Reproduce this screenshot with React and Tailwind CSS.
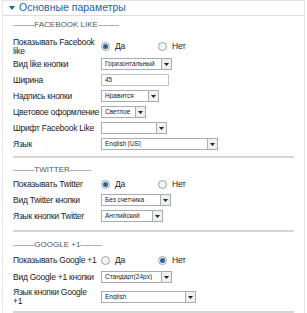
import React from "react";

function Select({ value, w }) {
  return (
    <div className={`flex h-[12px] items-center border border-[#a5acb5] bg-white ${w}`}>
      <span className="flex-1 overflow-hidden whitespace-nowrap pl-[3px] text-[6.5px] leading-none tracking-normal text-[#222]">{value}</span>
      <span className="flex h-[10px] w-[10px] shrink-0 items-center justify-center border-l border-[#a5acb5] bg-[#f0f0f0]">
        <svg width="5" height="3" viewBox="0 0 5 3">
          <path d="M0 0h5L2.5 3z" fill="#222" />
        </svg>
      </span>
    </div>
  );
}

function Radio({ checked, label }) {
  return (
    <span className="flex items-center gap-[5px]">
      <span className="flex h-[9px] w-[9px] items-center justify-center rounded-full border border-[#9aa3ad] bg-[#f4f4f4]">
        {checked && <span className="h-[5px] w-[5px] rounded-full bg-[#2a5fa0]" />}
      </span>
      {label}
    </span>
  );
}

function Row({ label, children, h = "h-[16px]", nowrap }) {
  return (
    <div className={`flex items-center ${h}`}>
      <div className={`w-[88px] shrink-0 pr-[4px] leading-[9px] ${nowrap ? "whitespace-nowrap" : ""}`}>{label}</div>
      {children}
    </div>
  );
}

function Toggle({ label, yes, h }) {
  return (
    <Row label={label} h={h}>
      <div className="flex">
        <div className="w-[57px]"><Radio checked={yes} label="Да" /></div>
        <Radio checked={!yes} label="Нет" />
      </div>
    </Row>
  );
}

function Title({ children, className }) {
  return <div className={`h-[10px] text-[8px] leading-[10px] tracking-normal text-[#555] ${className}`}>{children}</div>;
}

function Line({ className }) {
  return <div className={`h-[2px] w-[281px] bg-[#d6d6d6] ${className}`} />;
}

export default function App() {
  return (
    <div className="h-[313px] w-[307px] overflow-hidden bg-white font-['Liberation_Sans',Arial,sans-serif] text-[8.5px] tracking-[-0.25px] text-[#222]">
      <div className="mx-[2px] border-x border-t border-[#e4e4e4]">
        <div className="flex h-[15px] items-center gap-[4px] border-b border-[#dcdcdc] pl-[6px] text-[10.5px] tracking-normal text-[#1f5fa6]">
          <svg width="6" height="4" viewBox="0 0 6 4"><path d="M0 0h6L3 4z" fill="#1f5fa6" /></svg>
          Основные параметры
        </div>
        <div className="px-[10px] pt-[4px]">
          <Title>--------FACEBOOK LIKE--------</Title>
          <div className="mt-[7px]">
            <Toggle label="Показывать Facebook like" yes h="h-[19px]" />
            <Row label="Вид like кнопки"><Select value="Горизонтальный" w="w-[71px]" /></Row>
            <Row label="Ширина">
              <div className="flex h-[12px] w-[68px] items-center border border-[#c0c0c0] pl-[3px] text-[6.5px] tracking-normal">45</div>
            </Row>
            <Row label="Надпись кнопки"><Select value="Нравится" w="w-[58px]" /></Row>
            <Row label="Цветовое оформление" nowrap><Select value="Светлое" w="w-[45px]" /></Row>
            <Row label="Шрифт Facebook Like"><Select value="" w="w-[66px]" /></Row>
            <Row label="Язык"><Select value="English [US]" w="w-[117px]" /></Row>
          </div>
          <Line className="mt-[4px]" />
          <Title className="mt-[7px]">--------TWITTER--------</Title>
          <div className="mt-[1px]">
            <Toggle label="Показывать Twitter" yes />
            <Row label="Вид Twitter кнопки"><Select value="Без счетчика" w="w-[70px]" /></Row>
            <Row label="Язык кнопки Twitter"><Select value="Английский" w="w-[62px]" /></Row>
          </div>
          <Line className="mt-[6px]" />
          <Title className="mt-[8px]">--------GOOGLE +1--------</Title>
          <div className="mt-[2px]">
            <Toggle label="Показывать Google +1" yes={false} />
            <Row label="Вид Google +1 кнопки" h="h-[18px]"><Select value="Стандарт(24px)" w="w-[71px]" /></Row>
            <Row label="Язык кнопки Google +1" h="h-[22px]"><Select value="English" w="w-[95px]" /></Row>
          </div>
          <Line className="mt-[3px]" />
        </div>
      </div>
    </div>
  );
}
